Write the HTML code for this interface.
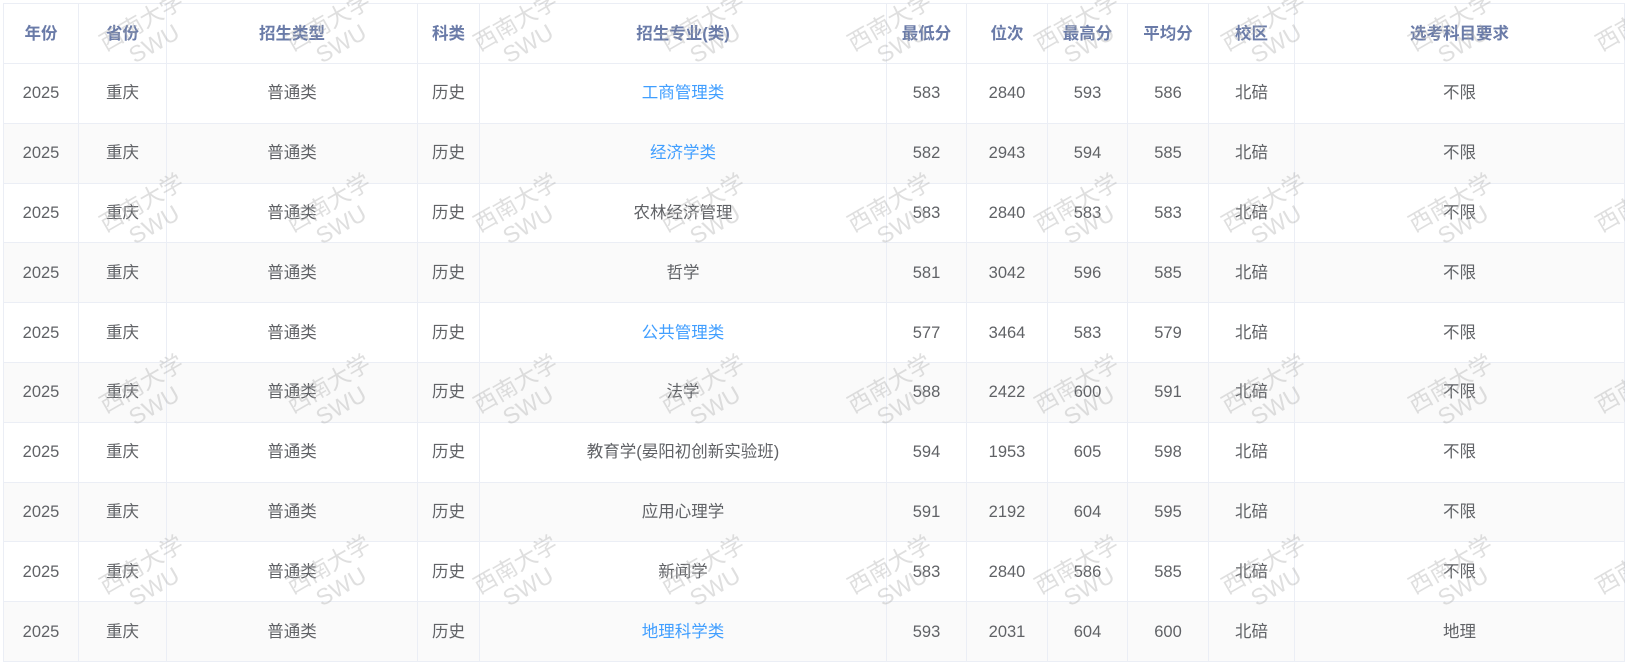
<!DOCTYPE html>
<html><head><meta charset="utf-8"><style>
body{margin:0;width:1625px;height:665px;background:#fff;overflow:hidden;position:relative;font-family:"Liberation Sans","Noto Sans CJK SC",sans-serif;}
table{position:absolute;left:3px;top:3px;border-collapse:collapse;width:1622px;table-layout:fixed;}
td,th{border:1px solid #ebeef5;text-align:center;font-size:16.5px;color:#606266;padding:0;line-height:20px;}
th{height:59px;color:#6a7ba8;font-weight:bold;}
td{height:58.8px;}
tr.s td{background:#fafafa;}
a{color:#409eff;text-decoration:none;}
.wm{position:absolute;width:124px;text-align:center;transform:rotate(-30deg);color:rgba(170,170,170,0.38);font-size:23px;line-height:25px;pointer-events:none;}
</style></head><body>
<table>
<colgroup><col style="width:75px"><col style="width:88px"><col style="width:251px"><col style="width:62px"><col style="width:407px"><col style="width:80px"><col style="width:81px"><col style="width:80px"><col style="width:81px"><col style="width:86px"><col></colgroup>
<tr><th>年份</th><th>省份</th><th>招生类型</th><th>科类</th><th>招生专业(类)</th><th>最低分</th><th>位次</th><th>最高分</th><th>平均分</th><th>校区</th><th>选考科目要求</th></tr>
<tr><td>2025</td><td>重庆</td><td>普通类</td><td>历史</td><td><a>工商管理类</a></td><td>583</td><td>2840</td><td>593</td><td>586</td><td>北碚</td><td>不限</td></tr>
<tr class="s"><td>2025</td><td>重庆</td><td>普通类</td><td>历史</td><td><a>经济学类</a></td><td>582</td><td>2943</td><td>594</td><td>585</td><td>北碚</td><td>不限</td></tr>
<tr><td>2025</td><td>重庆</td><td>普通类</td><td>历史</td><td>农林经济管理</td><td>583</td><td>2840</td><td>583</td><td>583</td><td>北碚</td><td>不限</td></tr>
<tr class="s"><td>2025</td><td>重庆</td><td>普通类</td><td>历史</td><td>哲学</td><td>581</td><td>3042</td><td>596</td><td>585</td><td>北碚</td><td>不限</td></tr>
<tr><td>2025</td><td>重庆</td><td>普通类</td><td>历史</td><td><a>公共管理类</a></td><td>577</td><td>3464</td><td>583</td><td>579</td><td>北碚</td><td>不限</td></tr>
<tr class="s"><td>2025</td><td>重庆</td><td>普通类</td><td>历史</td><td>法学</td><td>588</td><td>2422</td><td>600</td><td>591</td><td>北碚</td><td>不限</td></tr>
<tr><td>2025</td><td>重庆</td><td>普通类</td><td>历史</td><td>教育学(晏阳初创新实验班)</td><td>594</td><td>1953</td><td>605</td><td>598</td><td>北碚</td><td>不限</td></tr>
<tr class="s"><td>2025</td><td>重庆</td><td>普通类</td><td>历史</td><td>应用心理学</td><td>591</td><td>2192</td><td>604</td><td>595</td><td>北碚</td><td>不限</td></tr>
<tr><td>2025</td><td>重庆</td><td>普通类</td><td>历史</td><td>新闻学</td><td>583</td><td>2840</td><td>586</td><td>585</td><td>北碚</td><td>不限</td></tr>
<tr class="s"><td>2025</td><td>重庆</td><td>普通类</td><td>历史</td><td><a>地理科学类</a></td><td>593</td><td>2031</td><td>604</td><td>600</td><td>北碚</td><td>地理</td></tr>
</table>
<div id="w"></div>
<script>
var h='';var ys=[8,189,370,551];for(var i=0;i<ys.length;i++)for(var j=0;j<9;j++){h+='<div class="wm" style="left:'+(86+j*187)+'px;top:'+ys[i]+'px">西南大学<br>SWU</div>';}
document.getElementById('w').innerHTML=h;
</script>
</body></html>
